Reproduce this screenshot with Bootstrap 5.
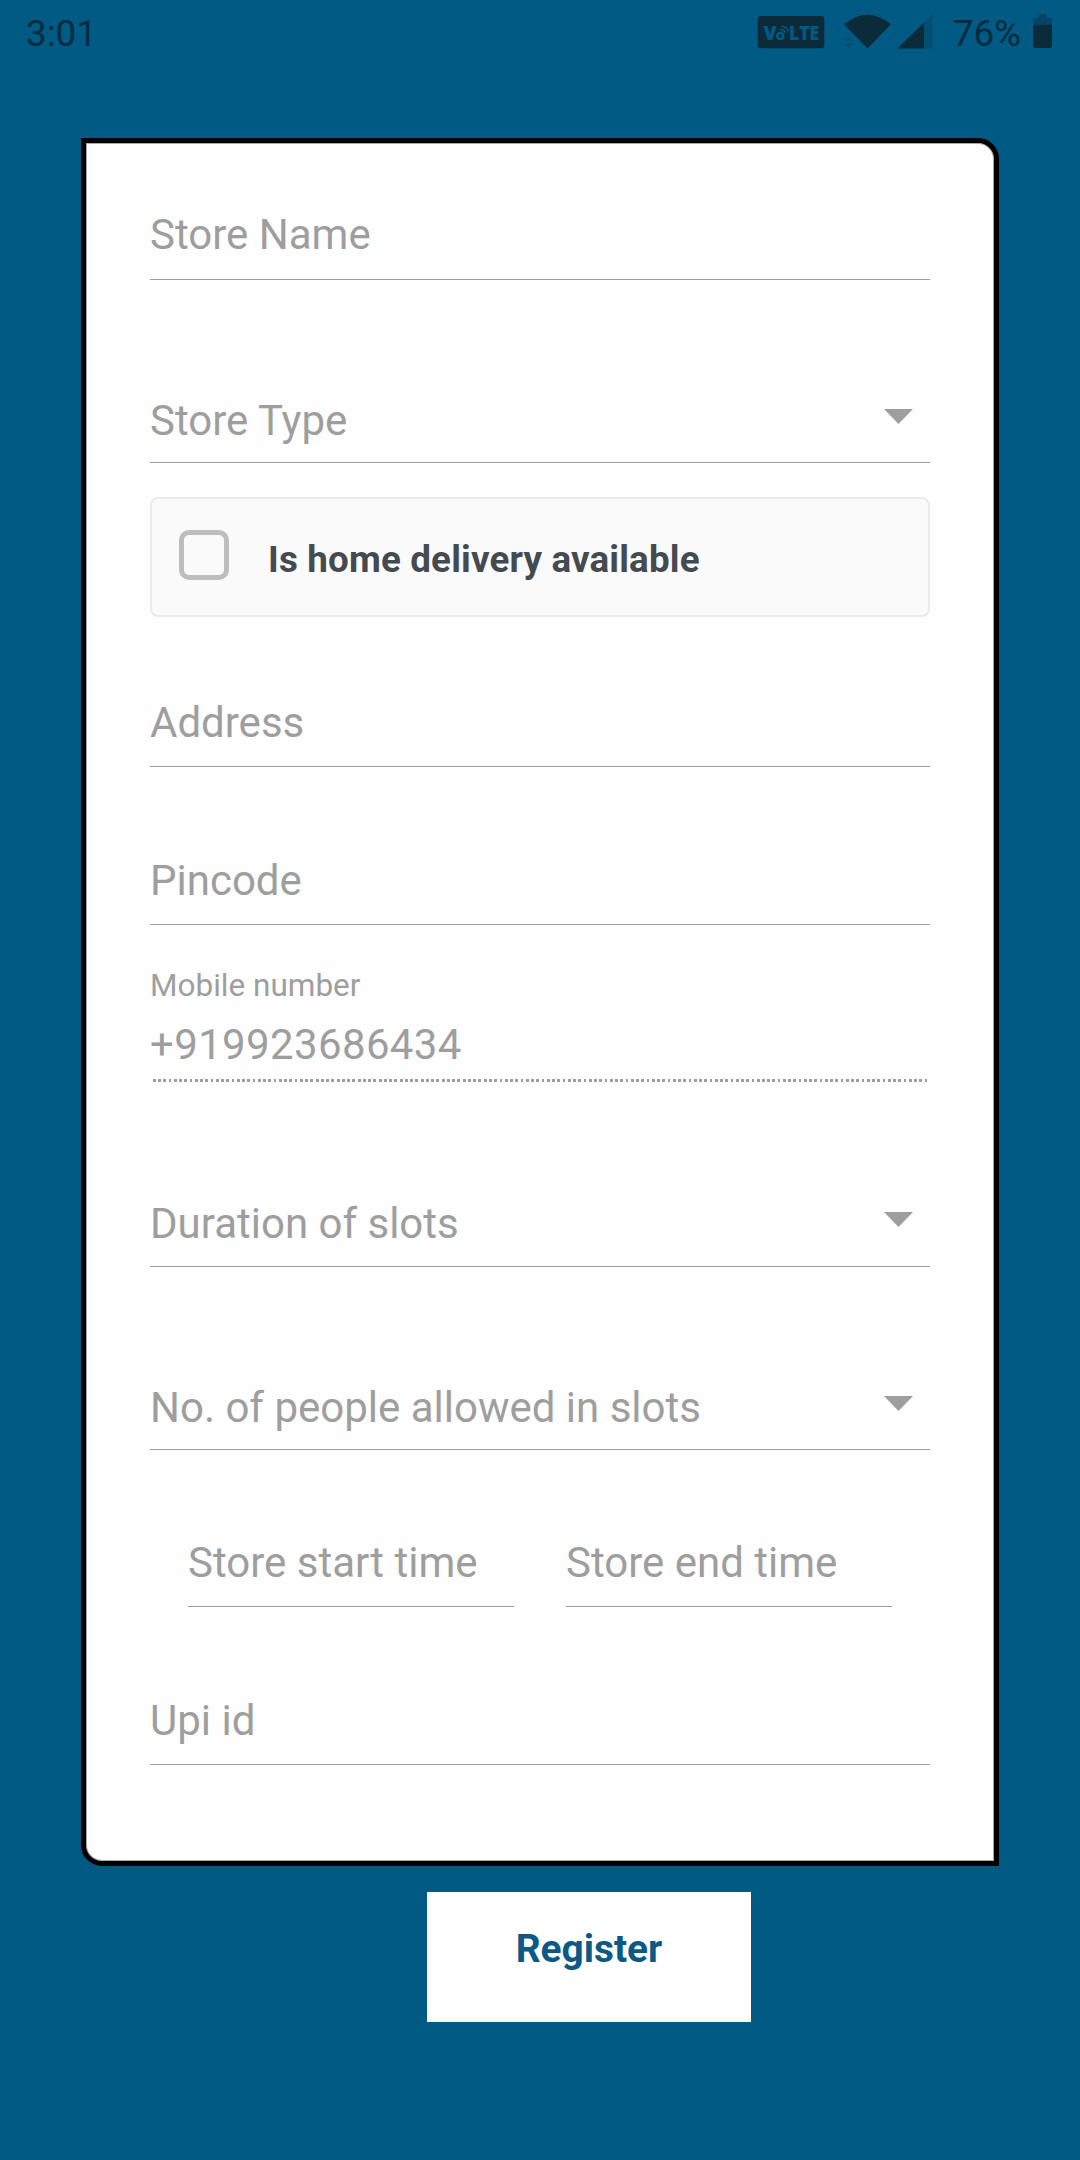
<!DOCTYPE html>
<html lang="en">
<head>
<meta charset="utf-8">
<meta name="viewport" content="width=device-width, initial-scale=1">
<title>Store registration</title>
<link href="https://cdn.jsdelivr.net/npm/bootstrap@5.3.0/dist/css/bootstrap.min.css" rel="stylesheet">
<style>
  body { background: #005a84; font-family: Roboto, "Liberation Sans", sans-serif; width: 1080px; height: 2160px; overflow: hidden; }
  .status-bar { height: 66px; padding: 0 27px 0 26px; color: #042c40; font-size: 36.75px; line-height: 67px; }
  .status-bar svg { display: block; }
  .store-card { margin: 72px 81px 0; padding: 0 64px 95px; border: 5px solid #000; border-radius: 0 21px 0 21px; background: #fefefe; box-shadow: inset 0 0 0 1px #a3a8ab, 0 0 1px #23485a; color: #9e9e9e; font-size: 42px; line-height: 48px; height: 1728px; }
  .field { height: 80px; border-bottom: 1px solid #9e9e9e; padding-bottom: 19px; white-space: nowrap; }
  .pick { padding-bottom: 17px; padding-right: 17px; }
  .pick svg { margin-bottom: 21px; }
  .field.g1 { padding-bottom: 20px; }
  .field.g5 { padding-bottom: 18px; }
  .check-box { height: 120px; margin-top: 34px; padding: 0 27px; border: 2px solid #ebebeb; border-radius: 8px; background: #fafafa; color: #444b50; font-size: 36.75px; letter-spacing: .17px; }
  .check-text { padding-top: 6px; }
  .tick { width: 50px; height: 50px; border: 5px solid #bdbdbd; border-radius: 10px; margin: 0 39px 4px 0; }
  .caption-line { margin-top: 43px; font-size: 31.5px; line-height: 36px; }
  .phone { margin-top: 17px; padding-bottom: 10px; letter-spacing: .36px; }
  .dots { height: 3px; background: repeating-linear-gradient(90deg, #9e9e9e 0 .5px, transparent .5px 3px, #9e9e9e 3px 5.25px); }
  .times { margin: 77px 38px 0; gap: 52px; }
  .g1 { margin-top: 57px; } .g2 { margin-top: 103px; } .g3 { margin-top: 70px; } .g4 { margin-top: 78px; } .g5 { margin-top: 105px; }
  .register { margin: 26px 0 0 427px; width: 324px; height: 130px; padding: 0 0 17px; color: #0a5a85; font-size: 38.85px; line-height: 48px; --bs-btn-hover-bg: #fff; }
</style>
</head>
<body>
<header class="status-bar d-flex justify-content-between">
  <span>3:01</span>
  <div class="d-flex">
    <svg width="196" height="66" viewBox="757 0 196 66" fill="#0b2b3b">
      <rect x="757.7" y="16" width="66.6" height="32.3" rx="3"/>
      <g fill="#005a84" font-family="Open Sans, sans-serif" font-weight="800">
        <text x="763.5" y="40.3" font-size="19.5" textLength="13" lengthAdjust="spacingAndGlyphs">V</text>
        <text x="789" y="40.3" font-size="19.5" textLength="30" lengthAdjust="spacingAndGlyphs">LTE</text>
      </g>
      <circle cx="780.3" cy="36" r="3.1" fill="none" stroke="#005a84" stroke-width="2.4"/>
      <path d="M780 29.8q4-.8 5.600 3.400M781.500 26.400q5.200-.2 7 4.800" fill="none" stroke="#005a84" stroke-width="1.500"/>
      <path d="M844 24.300Q867.500 5 891 24.300L867.500 48.500Z"/>
      <path d="M848.500 36l4.200 4.400h-8.400zM848.500 47.800l4.200-4.400h-8.400z" fill="#064d70"/>
      <path d="M932.500 14V48.500H924V22.500Z" fill="#044e73"/>
      <path d="M924 22.500V48.500H897.500Z"/>
    </svg>
    <span>76%</span>
    <svg class="ms-auto" width="32" height="66" viewBox="1021 0 32 66">
      <path d="M1038 14h9v4h5v7h-19v-7h5z" fill="#044568"/>
      <path d="M1033 24.700h19V46q0 2-2 2h-15q-2 0-2-2z" fill="#0b2b3b"/>
    </svg>
  </div>
</header>

<main class="store-card">
  <div class="field g1 d-flex align-items-end">Store Name</div>
  <div class="field pick g2 d-flex align-items-end justify-content-between">Store Type
    <svg width="29" height="15" fill="#9e9e9e"><path d="M0 0h29L14.500 15z"/></svg></div>
  <div class="check-box d-flex align-items-center fw-bold"><span class="tick"></span><span class="check-text">Is home delivery available</span></div>
  <div class="field g3 d-flex align-items-end">Address</div>
  <div class="field g4 d-flex align-items-end">Pincode</div>
  <div class="caption-line">Mobile number</div>
  <div class="phone">+919923686434</div>
  <div class="dots"></div>
  <div class="field pick g5 d-flex align-items-end justify-content-between">Duration of slots
    <svg width="29" height="15" fill="#9e9e9e"><path d="M0 0h29L14.500 15z"/></svg></div>
  <div class="field pick g2 d-flex align-items-end justify-content-between">No. of people allowed in slots
    <svg width="29" height="15" fill="#9e9e9e"><path d="M0 0h29L14.500 15z"/></svg></div>
  <div class="times d-flex">
    <div class="field flex-fill w-50 d-flex align-items-end">Store start time</div>
    <div class="field flex-fill w-50 d-flex align-items-end">Store end time</div>
  </div>
  <div class="field g4 d-flex align-items-end">Upi id</div>
</main>

<button type="button" class="btn btn-light register bg-white border-0 rounded-0 fw-bold d-flex align-items-center justify-content-center">Register</button>
<script src="https://cdn.jsdelivr.net/npm/bootstrap@5.3.0/dist/js/bootstrap.bundle.min.js"></script>
</body>
</html>
